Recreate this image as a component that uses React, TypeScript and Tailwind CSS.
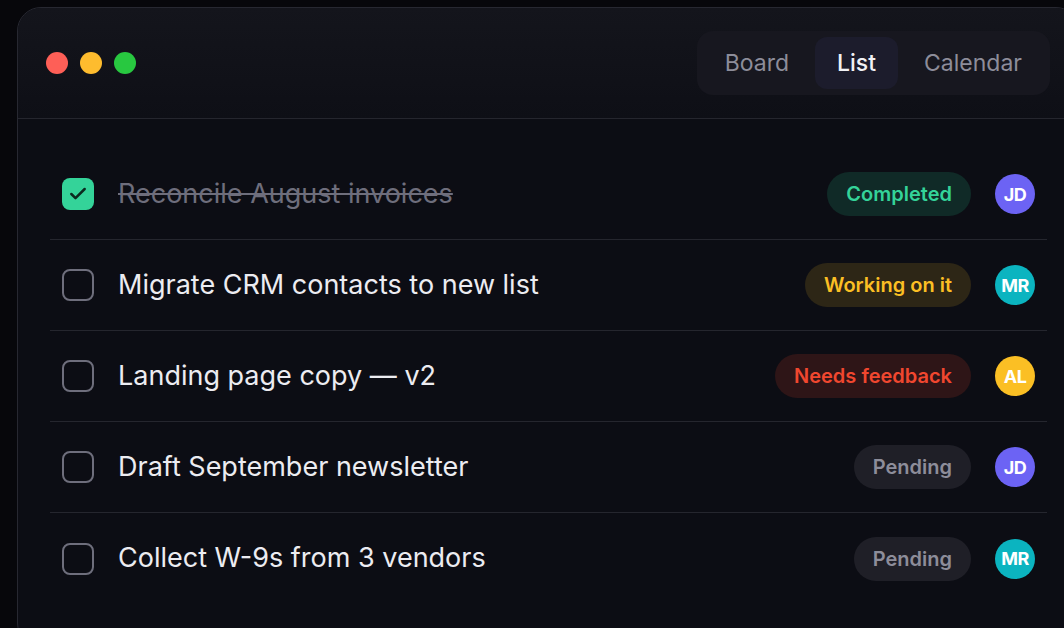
import { Check } from 'lucide-react';

type Task = {
    title: string;
    done: boolean;
    status: 'Completed' | 'Working on it' | 'Needs feedback' | 'Pending';
    owner: 'JD' | 'MR' | 'AL';
};

const tasks: Task[] = [
    { title: 'Reconcile August invoices', done: true, status: 'Completed', owner: 'JD' },
    { title: 'Migrate CRM contacts to new list', done: false, status: 'Working on it', owner: 'MR' },
    { title: 'Landing page copy — v2', done: false, status: 'Needs feedback', owner: 'AL' },
    { title: 'Draft September newsletter', done: false, status: 'Pending', owner: 'JD' },
    { title: 'Collect W-9s from 3 vendors', done: false, status: 'Pending', owner: 'MR' },
];

const statusStyles: Record<Task['status'], string> = {
    Completed: 'bg-[#102a27] text-[#34d399]',
    'Working on it': 'bg-[#2d2616] text-[#fbbf24]',
    'Needs feedback': 'bg-[#2e1517] text-[#f0472f]',
    Pending: 'bg-[#1f1f27] text-[#8d8d9a]',
};

const ownerStyles: Record<Task['owner'], string> = {
    JD: 'bg-[#6c63f4]',
    MR: 'bg-[#0bb4c0]',
    AL: 'bg-[#fbbf24]',
};

export default function App() {
    return (
        <div
            className="w-[1064px] h-[628px] overflow-hidden bg-[#07070b] pt-[7px] pl-[17px]"
            style={{ fontFamily: 'Inter, "Noto Sans", sans-serif' }}
        >
            <div className="w-[1063px] h-[640px] rounded-[24px] border border-[#272831] bg-[#0c0d14] overflow-hidden">
                {/* Title bar */}
                <div className="h-[111px] flex items-center justify-between pl-[28px] pr-[29px] border-b border-[#25262e] bg-gradient-to-b from-[#14151c] to-[#0e0f16]">
                    <div className="flex items-center gap-[12px]">
                        <span className="w-[22px] h-[22px] rounded-full bg-[#fe5f57]" />
                        <span className="w-[22px] h-[22px] rounded-full bg-[#febc2e]" />
                        <span className="w-[22px] h-[22px] rounded-full bg-[#28c840]" />
                    </div>
                    <div className="flex items-center gap-[4px] p-[6px] rounded-[16px] bg-[#17171f]">
                        <button className="h-[52px] px-[22px] rounded-[12px] text-[23px] text-[#8d8d9a]">Board</button>
                        <button className="h-[52px] px-[22px] rounded-[12px] text-[23px] font-medium text-[#f1f1f5] bg-[#1c1c2c]">
                            List
                        </button>
                        <button className="h-[52px] px-[22px] rounded-[12px] text-[23px] text-[#8d8d9a]">Calendar</button>
                    </div>
                </div>

                {/* Task list */}
                <div className="pt-[30px] px-[32px]">
                    {tasks.map((task, i) => (
                        <div
                            key={task.title}
                            className={`h-[91px] flex items-center pl-[12px] pr-[12px] ${i < tasks.length - 1 ? 'border-b border-[#25262e]' : ''}`}
                        >
                            {task.done ? (
                                <span className="w-[32px] h-[32px] rounded-[8px] bg-[#34d399] flex items-center justify-center">
                                    <Check className="w-[20px] h-[20px] text-[#0b2a1f]" strokeWidth={3} />
                                </span>
                            ) : (
                                <span className="w-[32px] h-[32px] rounded-[8px] border-[2.5px] border-[#6e6e7c]" />
                            )}
                            <span
                                className={`ml-[24px] text-[27px] ${task.done ? 'text-[#6e6e7c] line-through decoration-[2px]' : 'text-[#ececf1]'}`}
                            >
                                {task.title}
                            </span>
                            <span
                                className={`ml-auto h-[44px] px-[19px] rounded-full flex items-center text-[20px] font-semibold ${statusStyles[task.status]}`}
                            >
                                {task.status}
                            </span>
                            <span
                                className={`ml-[24px] w-[40px] h-[40px] rounded-full flex items-center justify-center text-[18px] font-bold text-white tracking-[-0.5px] ${ownerStyles[task.owner]}`}
                            >
                                {task.owner}
                            </span>
                        </div>
                    ))}
                </div>
            </div>
        </div>
    );
}
